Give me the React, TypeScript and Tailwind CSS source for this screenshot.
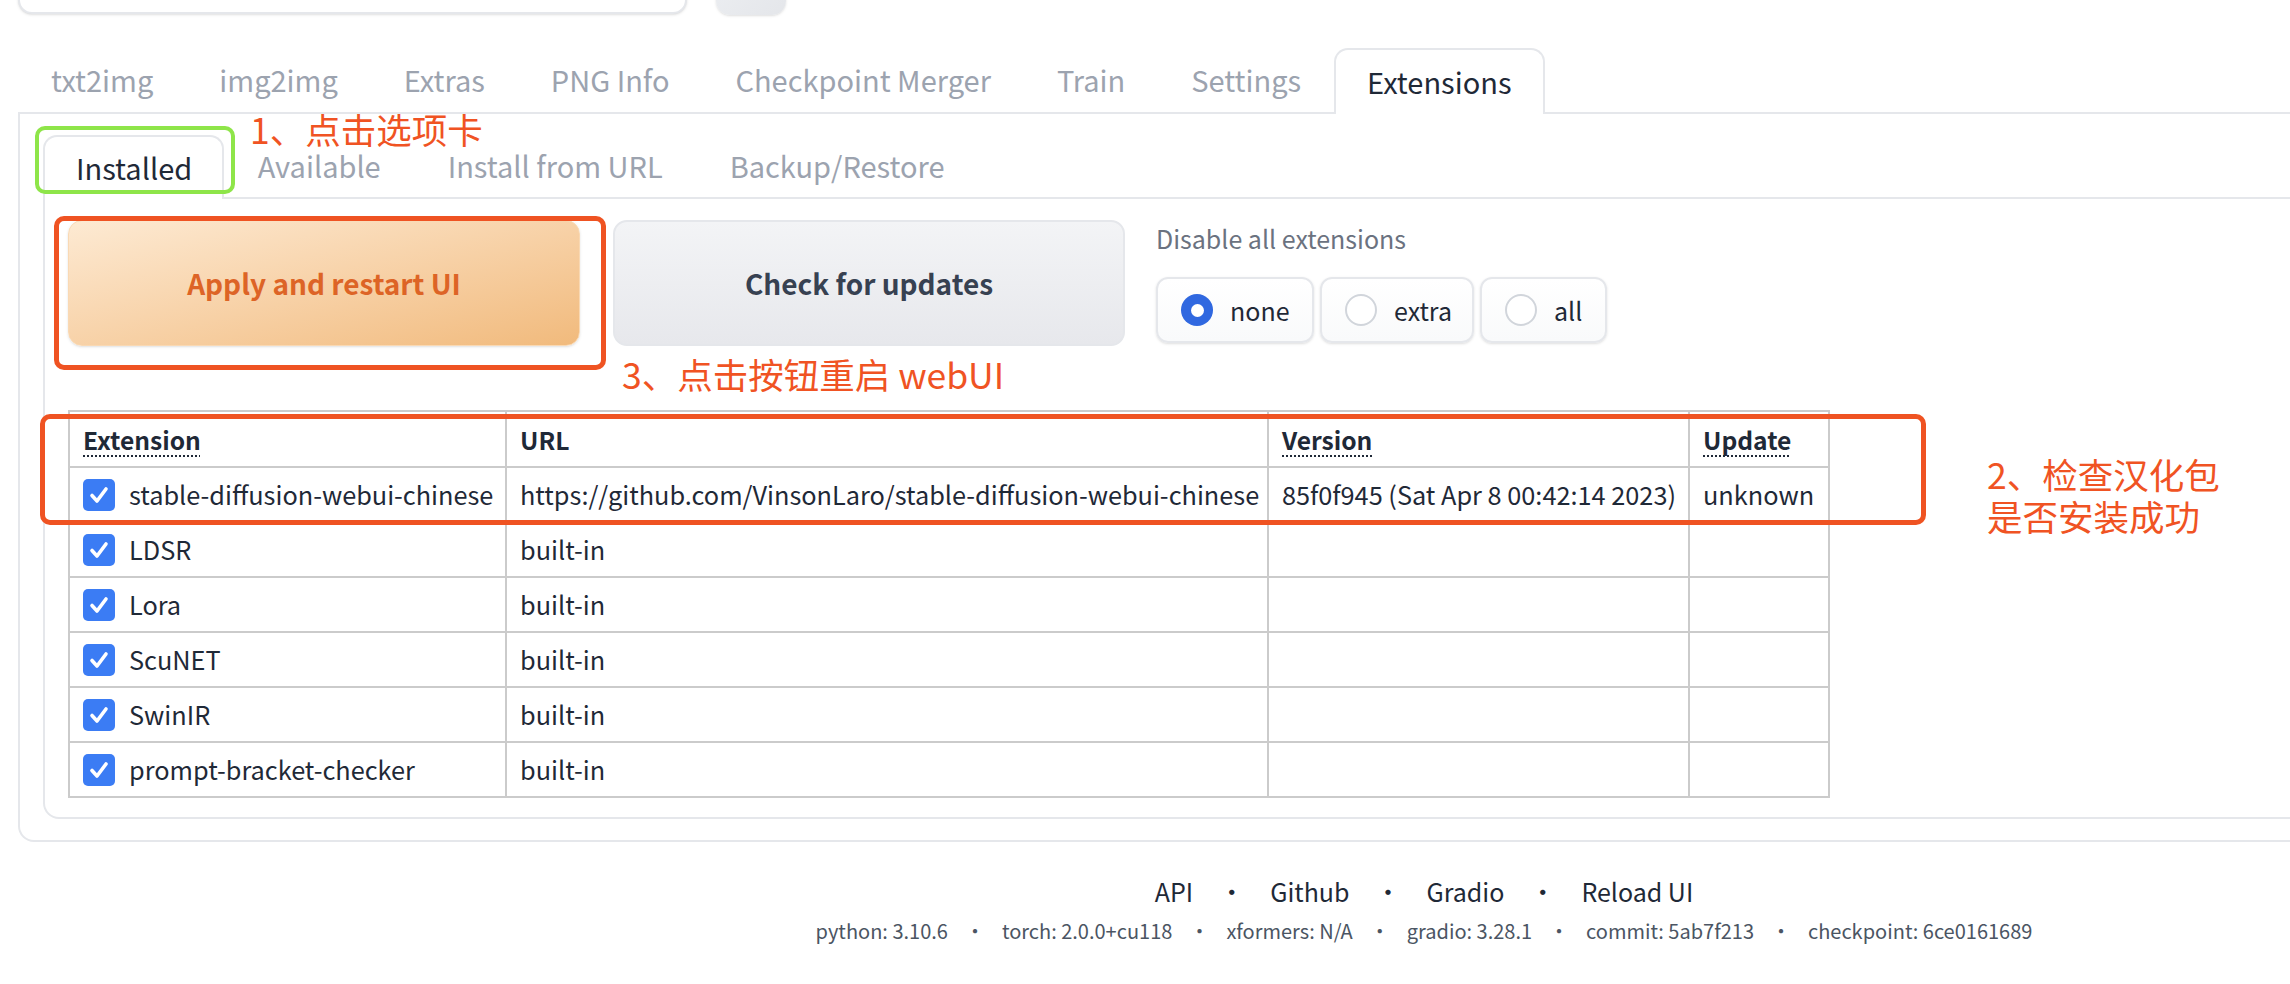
const font = { fontFamily: '"Noto Sans CJK SC", "Noto Sans", sans-serif' };

const tabs = ["txt2img", "img2img", "Extras", "PNG Info", "Checkpoint Merger", "Train", "Settings", "Extensions"];
const subTabs = ["Installed", "Available", "Install from URL", "Backup/Restore"];

const rows = [
  { name: "stable-diffusion-webui-chinese", url: "https://github.com/VinsonLaro/stable-diffusion-webui-chinese", version: "85f0f945 (Sat Apr 8 00:42:14 2023)", update: "unknown" },
  { name: "LDSR", url: "built-in", version: "", update: "" },
  { name: "Lora", url: "built-in", version: "", update: "" },
  { name: "ScuNET", url: "built-in", version: "", update: "" },
  { name: "SwinIR", url: "built-in", version: "", update: "" },
  { name: "prompt-bracket-checker", url: "built-in", version: "", update: "" },
];

const versions = ["python: 3.10.6", "torch: 2.0.0+cu118", "xformers: N/A", "gradio: 3.28.1", "commit: 5ab7f213", "checkpoint: 6ce0161689"];

const Check = () => (
  <span className="flex h-[32px] w-[32px] shrink-0 items-center justify-center rounded-[5px] bg-[#3b7cf4]">
    <svg width="22" height="22" viewBox="0 0 22 22">
      <polyline points="4,11.5 9,17 18,5" fill="none" stroke="white" strokeWidth="3.6" strokeLinecap="round" strokeLinejoin="round" />
    </svg>
  </span>
);

const Radio = ({ label, on, w }: { label: string; on?: boolean; w: string }) => (
  <div className={`flex h-[66px] ${w} items-center gap-[17px] rounded-[12px] border-2 border-[#e5e7eb] bg-gradient-to-b from-white to-[#f9fafb] px-[23px] shadow-sm`}>
    {on ? (
      <span className="flex h-[32px] w-[32px] shrink-0 items-center justify-center rounded-full bg-[#3068e0]">
        <span className="h-[13px] w-[13px] rounded-full bg-white" />
      </span>
    ) : (
      <span className="h-[32px] w-[32px] shrink-0 rounded-full border-2 border-[#d1d5db] bg-white" />
    )}
    <span className="text-[25px] leading-none text-[#1f2937]">{label}</span>
  </div>
);

const App = () => {
  return (
    <div className="relative h-[984px] w-[2290px] overflow-hidden bg-white" style={font}>
      <div className="w-[2848px] px-[18px]">
        {/* top row, mostly scrolled away */}
        <div className="flex h-[15px] items-end">
          <div className="mb-[1px] h-[60px] w-[669px] rounded-[14px] border-2 border-[#e5e7eb] bg-white shadow-sm" />
          <div className="ml-[29px] h-[60px] w-[70px] rounded-[14px] bg-gradient-to-br from-[#eef0f3] to-[#e4e6ea] shadow-sm" />
        </div>

        {/* main tabs */}
        <div className="mt-[33px] flex h-[66px] border-b-2 border-[#e5e7eb]">
          {tabs.map((t) => (
            <div
              key={t}
              className={
                t === "Extensions"
                  ? "-mb-[2px] flex items-center rounded-t-[14px] border-2 border-b-0 border-[#e5e7eb] bg-white px-[31px] text-[29px] text-[#1f2937]"
                  : "flex items-center border-2 border-transparent px-[31px] text-[29px] text-[#9ca3af]"
              }
            >
              {t}
            </div>
          ))}
        </div>

        {/* outer panel */}
        <div className="rounded-b-[16px] border-x-2 border-b-2 border-[#e5e7eb] px-[23px] pb-[21px] pt-[21px]">
          <div className="flex h-[64px] border-b-2 border-[#e5e7eb]">
            {subTabs.map((t) => (
              <div
                key={t}
                className={
                  t === "Installed"
                    ? "-mb-[2px] flex items-center rounded-t-[14px] border-2 border-b-0 border-[#e5e7eb] bg-white pl-[31px] pr-[30px] text-[29px] text-[#1f2937]"
                    : "flex items-center border-2 border-transparent px-[31.5px] text-[29px] text-[#9ca3af]"
                }
              >
                {t}
              </div>
            ))}
          </div>

          <div className="rounded-b-[16px] border-x-2 border-b-2 border-[#e5e7eb] px-[23px] pb-[19px] pt-[21px]">
            <div className="flex items-start">
              <button className="flex h-[126px] w-[512px] items-center justify-center rounded-[14px] border border-[#f9d9b4] bg-gradient-to-br from-[#fdead3] to-[#f1ba7c] text-[28px] font-bold text-[#dd6426] shadow-sm">
                Apply and restart UI
              </button>
              <button className="ml-[33px] flex h-[126px] w-[512px] items-center justify-center rounded-[14px] border-2 border-[#e5e7eb] bg-gradient-to-b from-[#f3f4f6] to-[#e7e8ec] text-[28px] font-bold text-[#374151]">
                Check for updates
              </button>
              <div className="ml-[31px] flex flex-col">
                <div className="h-[36px] text-[25px] leading-[36px] text-[#6b7280]">Disable all extensions</div>
                <div className="mt-[21px] flex gap-[6px]">
                  <Radio label="none" on w="w-[158px]" />
                  <Radio label="extra" w="w-[154px]" />
                  <Radio label="all" w="w-[127px]" />
                </div>
              </div>
            </div>

            <table className="mt-[64px] w-[1760px] table-fixed border-collapse border-2 border-[#cbcbcb] text-[25.3px] text-[#1f2937]">
              <colgroup>
                <col className="w-[437px]" />
                <col className="w-[762px]" />
                <col className="w-[421px]" />
                <col className="w-[140px]" />
              </colgroup>
              <thead>
                <tr className="h-[56px] text-[24.6px]">
                  <th className="border-2 border-[#cbcbcb] pl-[13px] text-left font-bold">
                    <span className="underline decoration-dotted decoration-2 underline-offset-[6px]">Extension</span>
                  </th>
                  <th className="border-2 border-[#cbcbcb] pl-[13px] text-left font-bold">URL</th>
                  <th className="border-2 border-[#cbcbcb] pl-[13px] text-left font-bold">
                    <span className="underline decoration-dotted decoration-2 underline-offset-[6px]">Version</span>
                  </th>
                  <th className="border-2 border-[#cbcbcb] pl-[13px] text-left font-bold">
                    <span className="underline decoration-dotted decoration-2 underline-offset-[6px]">Update</span>
                  </th>
                </tr>
              </thead>
              <tbody>
                {rows.map((r) => (
                  <tr key={r.name} className="h-[55px]">
                    <td className="border-2 border-[#cbcbcb] pl-[13px]">
                      <div className="flex items-center gap-[14px] whitespace-nowrap">
                        <Check />
                        {r.name}
                      </div>
                    </td>
                    <td className="whitespace-nowrap border-2 border-[#cbcbcb] pl-[13px]">{r.url}</td>
                    <td className="whitespace-nowrap border-2 border-[#cbcbcb] pl-[13px]">{r.version}</td>
                    <td className="whitespace-nowrap border-2 border-[#cbcbcb] pl-[13px]">{r.update}</td>
                  </tr>
                ))}
              </tbody>
            </table>
          </div>
        </div>

        {/* footer */}
        <div className="mt-[30px] flex h-[40px] items-center justify-center text-[25px] text-[#1f2937]">
          <span>API</span>
          <span className="mx-[26px]">•</span>
          <span>Github</span>
          <span className="mx-[26px]">•</span>
          <span>Gradio</span>
          <span className="mx-[26px]">•</span>
          <span>Reload UI</span>
        </div>
        <div className="flex h-[38px] items-center justify-center text-[20px] text-[#4b5563]">
          {versions.map((v, i) => (
            <span key={v} className="flex items-center">
              {i > 0 && <span className="mx-[17px]">•</span>}
              {v}
            </span>
          ))}
        </div>
      </div>

      {/* annotations drawn over the screenshot */}
      <div className="absolute left-[35px] top-[126px] h-[68px] w-[200px] rounded-[10px] border-[4px] border-[#8ee549]" />
      <div className="absolute left-[250px] top-[111px] text-[35.5px] leading-none text-[#f05323]">1、点击选项卡</div>
      <div className="absolute left-[54px] top-[216px] h-[154px] w-[552px] rounded-[10px] border-[5px] border-[#ef5322]" />
      <div className="absolute left-[622px] top-[356px] text-[35.5px] leading-none text-[#f05323]">3、点击按钮重启 webUI</div>
      <div className="absolute left-[40px] top-[414px] h-[111px] w-[1886px] rounded-[10px] border-[5px] border-[#ef5322]" />
      <div className="absolute left-[1987px] top-[453px] text-[35.5px] leading-[42px] text-[#f05323]">
        2、检查汉化包
        <br />
        是否安装成功
      </div>
    </div>
  );
};

export default App;
